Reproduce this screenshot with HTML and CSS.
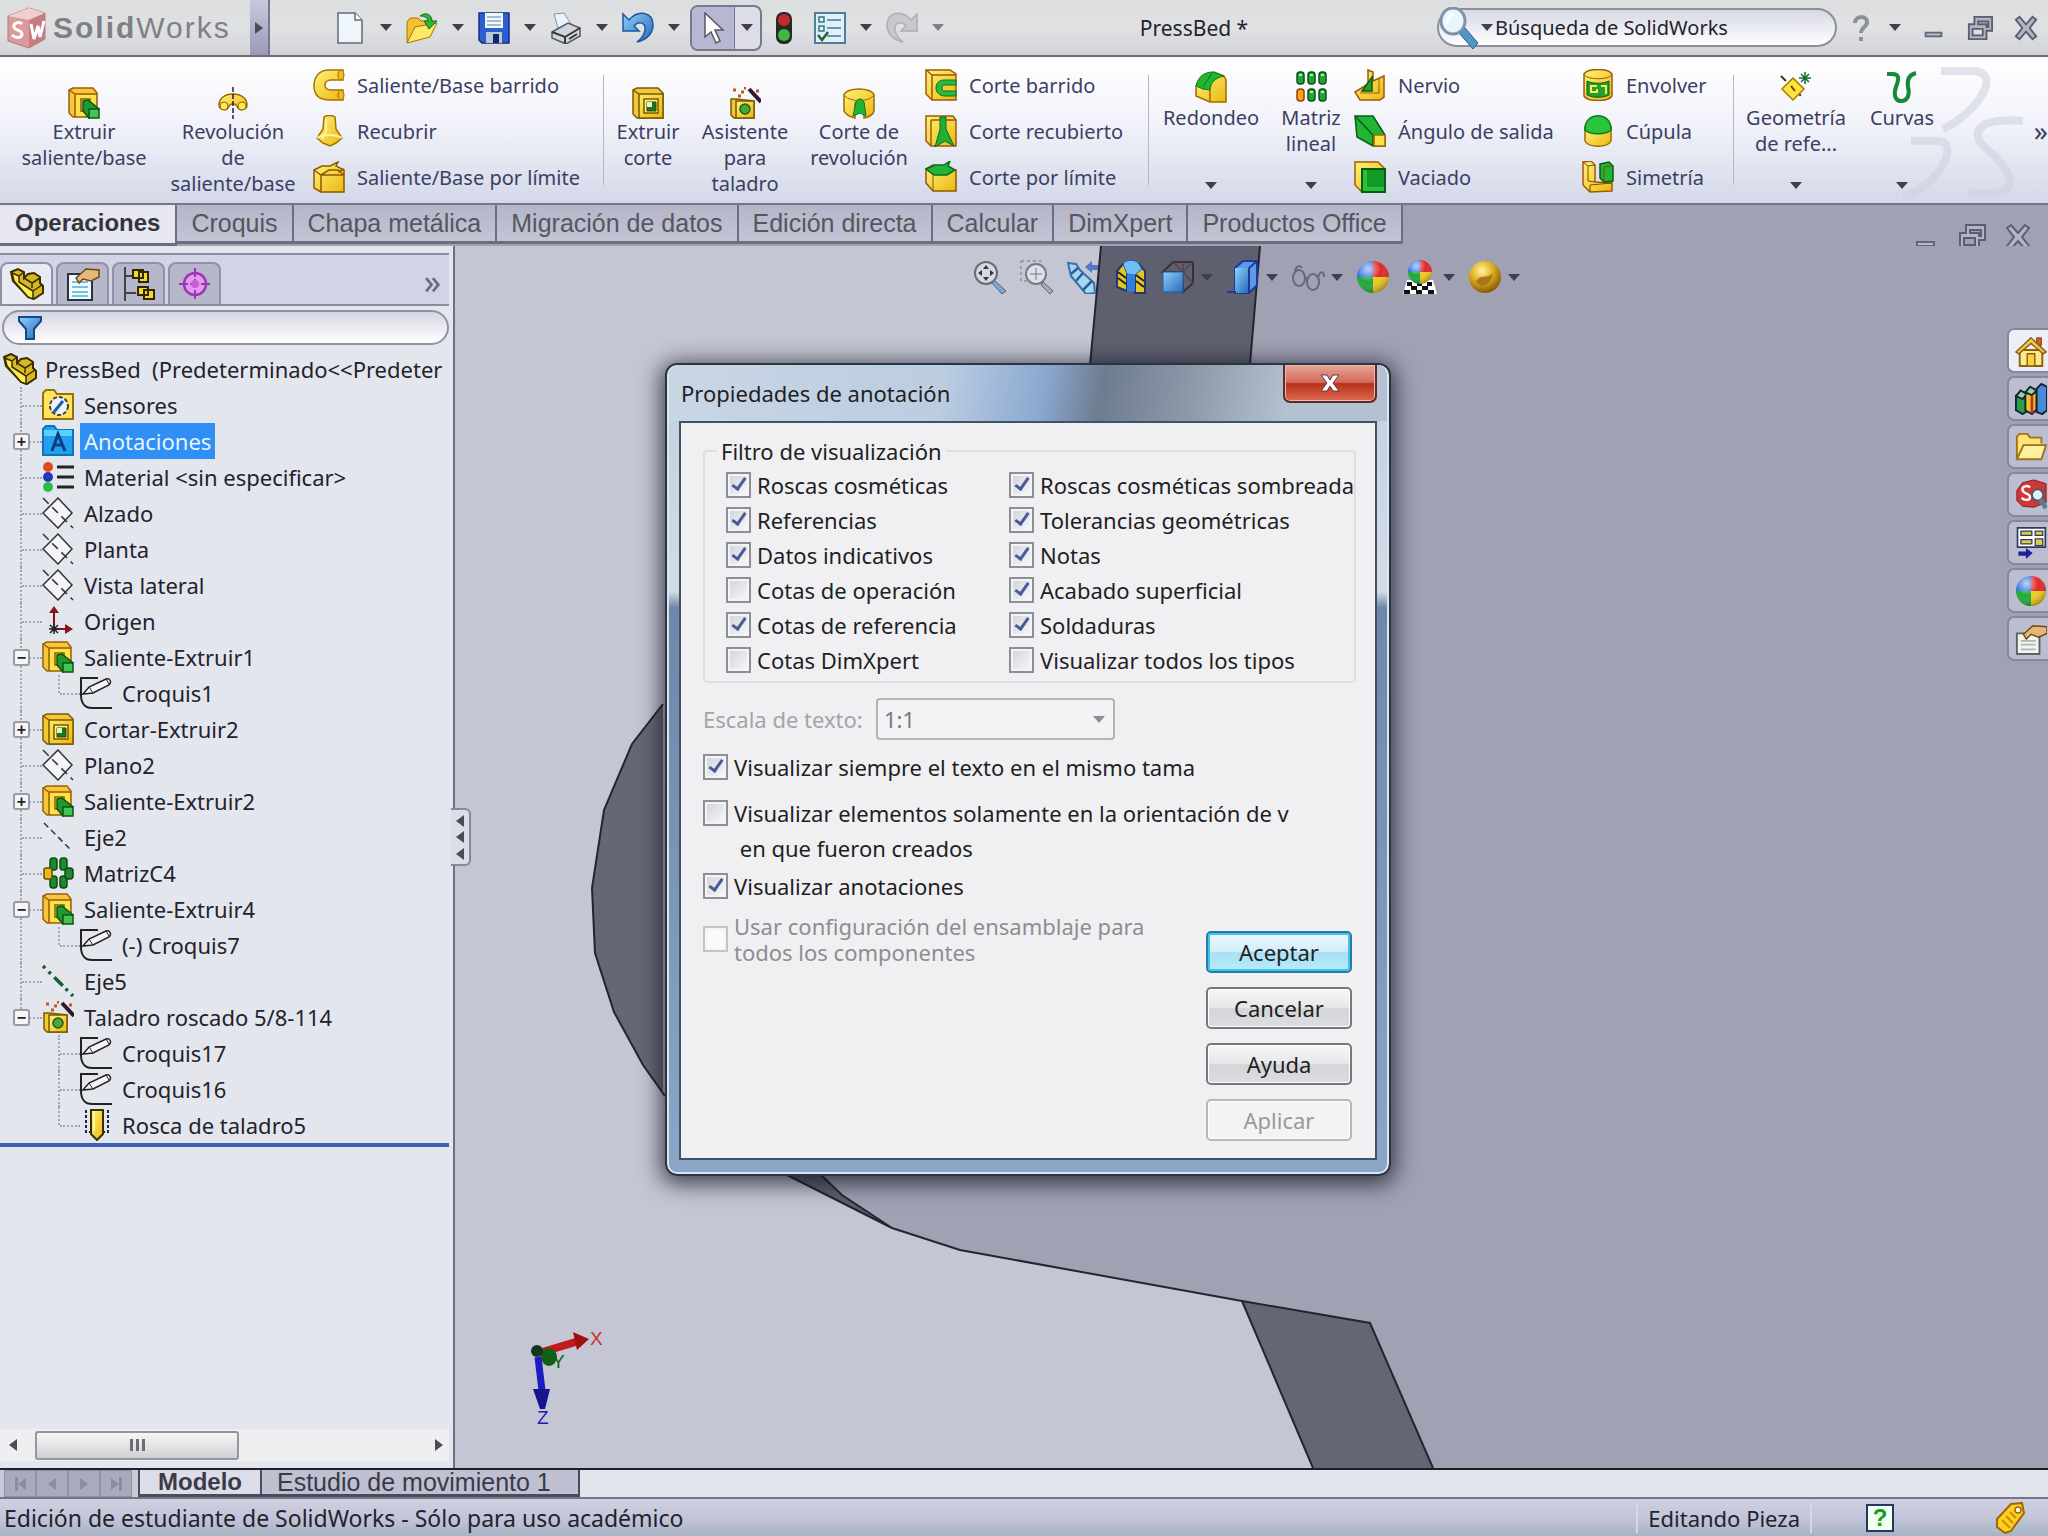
FILE: index.html
```html
<!DOCTYPE html>
<html lang="es">
<head>
  <meta charset="UTF-8" />
  <meta name="viewport" content="width=device-width, initial-scale=1.0"/>
  <title>SolidWorks - PressBed</title>
  <link rel="stylesheet" href="styles.css">
</head>
<body>
  <!-- icon sheet -->
  <svg class="sprite" aria-hidden="true">
    <defs>
      <linearGradient id="gold" x1="0" y1="0" x2="1" y2="1"><stop offset="0" stop-color="#fff27a"/><stop offset="1" stop-color="#ecb810"/></linearGradient>
      <linearGradient id="blue" x1="0" y1="0" x2="1" y2="1"><stop offset="0" stop-color="#8fd0ff"/><stop offset="1" stop-color="#2468b8"/></linearGradient>
      <radialGradient id="goldBall" cx=".4" cy=".3" r=".7"><stop offset="0" stop-color="#fff6a0"/><stop offset=".5" stop-color="#e0ae20"/><stop offset="1" stop-color="#8a5a08"/></radialGradient>
      <radialGradient id="shine" cx=".35" cy=".25" r=".8"><stop offset="0" stop-color="#fff" stop-opacity=".7"/><stop offset=".5" stop-color="#fff" stop-opacity="0"/><stop offset="1" stop-color="#000" stop-opacity=".35"/></radialGradient>
    </defs>
    <symbol id="logo" viewBox="0 0 42 44">
      <path d="M3 10 24 2l16 5v26L24 42 3 35z" fill="#d99a9a" stroke="#b5787c"/>
      <path d="M3 10 24 2l16 5-16 7z" fill="#efd0ce"/><path d="M24 14 40 7v26l-16 9z" fill="#c67c80"/>
      <path d="M17 18c-3-3-9-1-8 3s8 3 8 7-6 5-10 1M26 18l3 15 4-13 2 11 4-16" fill="none" stroke="#fff" stroke-width="3"/>
    </symbol>
    <symbol id="new" viewBox="0 0 32 32"><path d="M4 1h17l7 7v23H4z" fill="#eef5fb" stroke="#5f6b78" stroke-width="1.5"/><path d="M21 1v7h7" fill="#fff" stroke="#5f6b78" stroke-width="1.5"/></symbol>
    <symbol id="open" viewBox="0 0 32 32"><path d="M1 30V10l3-4h8l3 3h10v6z" fill="#f2c230" stroke="#a87400"/><path d="M1 31 9 15l22-4-7 14z" fill="#ffe76a" stroke="#a87400"/><path d="M14 4c6-5 12-1 12 5h5l-8 8-5-8h4c0-3-3-5-8-5z" fill="#2fb52f" stroke="#15701a"/></symbol>
    <symbol id="save" viewBox="0 0 32 32"><path d="M1 1h30v30H4l-3-3z" fill="#2b5fd0" stroke="#132f85" stroke-width="1.5"/><path d="M7 1h18v15H7z" fill="#f3f8ff"/><path d="M9 5h14M9 9h14M9 13h14" stroke="#8aa4c8" stroke-width="1.5"/><path d="M8 20h16v11H8z" fill="#b9c7dd"/><path d="M15 22h6v9h-6z" fill="#12266b"/></symbol>
    <symbol id="print" viewBox="0 0 32 32"><path d="m8 16-4-14 10-1 7 11z" fill="#e7f3ff" stroke="#7d97b5"/><path d="m2 20 16-9 12 5v8L16 32 2 26z" fill="#d2d5da" stroke="#555a63" stroke-width="1.5"/><path d="m2 20 13 5 15-9M15 25v7M19 27l8-5" fill="none" stroke="#33363d" stroke-width="2"/></symbol>
    <symbol id="undo" viewBox="0 0 32 32"><path d="M1 2v17h16l-5-5c5-6 12-3 11 4-1 6-4 9-8 12 10-2 16-9 16-17C31 0 16-3 7 8z" fill="url(#blue)" stroke="#1c559b" stroke-width="1.5"/></symbol>
    <symbol id="redo" viewBox="0 0 32 32"><path d="M31 2v17H15l5-5c-5-6-12-3-11 4 1 6 4 9 8 12C7 28 1 21 1 13 1 0 16-3 25 8z" fill="#b8bbc2" stroke="#8d9098" stroke-width="1.5"/></symbol>
    <symbol id="cursor" viewBox="0 0 32 32"><path d="M8 1v24l6-5 5 11 4-2-5-11h8z" fill="#fff" stroke="#555866" stroke-width="1.5"/></symbol>
    <symbol id="traffic" viewBox="0 0 18 32"><rect x="1" y="0" width="16" height="32" rx="7" fill="#262a26"/><circle cx="9" cy="8" r="6" fill="#c22b2b"/><circle cx="9" cy="23" r="6" fill="#3fb83f"/></symbol>
    <symbol id="options" viewBox="0 0 32 32"><path d="M1 1h30v30H1z" fill="#dff0f8" stroke="#4f7f96" stroke-width="2"/><path d="M5 5h5v5H5zM5 14h5v5H5z" fill="none" stroke="#347a74" stroke-width="1.5"/><path d="M13 8h14M13 16h14M13 24h14" stroke="#6a98b0" stroke-width="2"/><path d="m4 23 4 5 6-8" fill="none" stroke="#23613a" stroke-width="2.5"/></symbol>
    <symbol id="lens" viewBox="0 0 40 42"><path d="m20 26 6-5 13 15-5 6z" fill="#4f98c4" stroke="#2b5f86"/><ellipse cx="14" cy="14" rx="12" ry="13" fill="#e8f5fc" stroke="#7f93a8" stroke-width="3"/><path d="M8 17c0-6 2-9 7-10" stroke="#fff" stroke-width="3" fill="none"/></symbol>
    <symbol id="help" viewBox="0 0 20 28"><path d="M4 9c0-8 13-8 12 0-1 4-6 5-6 10M10 23v4" fill="none" stroke="#8d8f99" stroke-width="4"/></symbol>
    <symbol id="minimize" viewBox="0 0 28 28"><path d="M5 19h17v4H5z" fill="#b9bac6" stroke="#63667a" stroke-width="2"/></symbol>
    <symbol id="restore" viewBox="0 0 28 28"><path d="M8 2h19v15h-6v9H2V10h6zM12 7v3h9v3h2V7zM6 15v7h11v-7z" fill="#b4b5c4" fill-rule="evenodd" stroke="#5b5e72" stroke-width="2"/></symbol>
    <symbol id="close" viewBox="0 0 28 28"><path d="m3 5 4-3 7 8 7-8 4 3-7 9 7 9-4 3-7-8-7 8-4-3 7-9z" fill="#b4b5c4" stroke="#5b5e72" stroke-width="2"/></symbol>
    <symbol id="extrude" viewBox="0 0 32 32"><path d="M1 3 5 1h20l4 5v24H5l-4-4z" fill="#f6c63c" stroke="#9a6008" stroke-width="1.5"/><path d="M1 3l6 4h22M7 7v23" fill="none" stroke="#9a6008" stroke-width="1.5"/><path d="M8 8h20v21H8z" fill="#ffe24a"/><path d="M13 12h9v12h-9z" fill="#fff8a0" stroke="#8a5a00" stroke-width="1.5"/><path d="m15 14 5-1 11 9-10 9-6-7z" fill="#1f9a2c" stroke="#0c5515" stroke-width="1.5"/><path d="M21 22h10v9H21z" fill="#45c455" stroke="#0c5515" stroke-width="1.5"/></symbol>
    <symbol id="cut" viewBox="0 0 32 32"><path d="M1 3 5 1h21l5 5v25H5l-4-4z" fill="#f2c83a" stroke="#7a5a00" stroke-width="1.5"/><path d="M7 7h24v24H7zM1 3l6 4" fill="url(#gold)" stroke="#7a5a00" stroke-width="1.5"/><path d="M12 12h14v14H12z" fill="#fff07a" stroke="#7a5a00" stroke-width="1.5"/><path d="M15 15h9v9h-9z" fill="#187a24" stroke="#3e3c00"/><path d="M15 15h5v5h-5z" fill="#e8f4c8"/></symbol>
    <symbol id="revolve" viewBox="0 0 32 32"><path d="M16 7C7 7 2 12 2 18c0 5 8 7 10 1 2-3 6-3 8 0 2 6 10 4 10-1 0-6-5-11-14-11z" fill="url(#gold)" stroke="#9a6500" stroke-width="1.5"/><circle cx="7" cy="19" r="4" fill="#ffe95a" stroke="#9a6500"/><circle cx="25" cy="19" r="4" fill="#ffe95a" stroke="#9a6500"/><path d="M16 0v32" stroke="#222" stroke-width="1.5" stroke-dasharray="5 2"/></symbol>
    <symbol id="sweep" viewBox="0 0 32 32"><path d="M30 1H16C6 1 1 8 1 17c0 10 6 14 16 14h13V21H18c-8 0-8-10 0-10h12z" fill="url(#gold)" stroke="#a87000" stroke-width="1.5"/><ellipse cx="28" cy="6" rx="3" ry="5" fill="#f0bb20" stroke="#a87000"/><ellipse cx="28" cy="26" rx="3" ry="5" fill="#f0bb20" stroke="#a87000"/></symbol>
    <symbol id="loft" viewBox="0 0 32 32"><path d="M11 2c2-2 8-2 11 0l1 12 6 9-6 5-6 3-7-3-6-5 6-9z" fill="url(#gold)" stroke="#a87000" stroke-width="1.5"/><path d="M4 23c6-4 18-4 25 0M13 4v12l-4 8" fill="none" stroke="#fff2a0" stroke-width="2"/></symbol>
    <symbol id="boundary" viewBox="0 0 32 32"><path d="m1 9 8-4h8l8-4-2 4 8 4v22H8l-7-4z" fill="url(#gold)" stroke="#8a5a00" stroke-width="1.5"/><path d="m1 9 7 5h23M8 14v16M8 14l8-5h9l6 5M31 8l-6 3" fill="none" stroke="#8a5a00" stroke-width="1.5"/></symbol>
    <symbol id="wizard" viewBox="0 0 32 32"><path d="M2 12h5l18 2v17H5l-3-3z" fill="#f2c83a" stroke="#7a5a00" stroke-width="1.5"/><path d="M7 14h18v17H7z" fill="url(#gold)" stroke="#7a5a00" stroke-width="1.5"/><circle cx="16" cy="22" r="5" fill="#45a83c" stroke="#245c16" stroke-width="1.5"/><path d="m20 2 12 13" stroke="#2b1c30" stroke-width="4"/><path d="M4 3h3M12 5h3M9 9h3M15 1h2M27 4h3" stroke="#c05a20" stroke-width="3"/></symbol>
    <symbol id="cutrev" viewBox="0 0 32 32"><path d="M1 8v16c2 5 8 6 11 7V17c2-5 7-5 9 0v14c5-1 9-3 10-7V8c-2-8-28-8-30 0z" fill="url(#gold)" stroke="#a06a00" stroke-width="1.5"/><path d="M2 9c5 6 23 6 28 0" fill="none" stroke="#a06a00"/><path d="m10 29 3-14c2-4 6-4 8 0l2 14-6-3z" fill="#22b534" stroke="#0e7a1c"/></symbol>
    <symbol id="cutsweep" viewBox="0 0 32 32"><path d="M1 1h24l6 4v26H7l-6-6z" fill="url(#gold)" stroke="#a05a08" stroke-width="1.5"/><path d="M7 6h24M7 6v25M1 1l6 5" fill="none" stroke="#a05a08" stroke-width="1.5"/><path d="M31 11H20c-7 0-9 4-9 8s3 8 9 8h11v-5H20c-4 0-4-6 0-6h11z" fill="#2cb83c" stroke="#0f7420"/></symbol>
    <symbol id="cutloft" viewBox="0 0 32 32"><path d="M1 1h27l3 4v26H6l-5-5z" fill="url(#gold)" stroke="#a05a08" stroke-width="1.5"/><path d="M6 5h25M6 5v26" fill="none" stroke="#a05a08" stroke-width="1.5"/><path d="M15 2h6v12l8 17-9-5-10 6 5-18z" fill="#24ae36" stroke="#0d6b1b"/></symbol>
    <symbol id="cutbound" viewBox="0 0 32 32"><path d="m1 8 7-4 23 5v21H8l-7-8z" fill="url(#gold)" stroke="#8a5a00" stroke-width="1.5"/><path d="m1 8 9-4h9l6-4-2 5 7 4-8 5H9z" fill="#26b438" stroke="#0d6b1b" stroke-width="1.5"/><path d="M8 14v16" stroke="#8a5a00"/></symbol>
    <symbol id="fillet" viewBox="0 0 32 32"><path d="M1 15 9 6l10-5 10 4 2 4v22H15L1 25z" fill="url(#gold)" stroke="#a06a00" stroke-width="1.5"/><path d="M1 15C3 5 10 1 18 1l11 4c-9 2-13 6-14 14l-7-1z" fill="#22b534" stroke="#0e7a1c"/><path d="M15 19v12" stroke="#a06a00" stroke-width="1.5"/><path d="m8 16 9-14" stroke="#0e7a1c"/></symbol>
    <symbol id="pattern" viewBox="0 0 32 32"><g fill="#22a534" stroke="#0a5216" stroke-width="1.5"><rect x="2" y="1" width="7" height="12" rx="3"/><rect x="13" y="1" width="7" height="12" rx="3"/><rect x="24" y="1" width="7" height="12" rx="3"/><rect x="13" y="18" width="7" height="12" rx="3"/><rect x="24" y="18" width="7" height="12" rx="3"/></g><rect x="2" y="18" width="7" height="12" rx="3" fill="#f0a820" stroke="#a03c08" stroke-width="1.5"/><path d="M4 4h3M15 4h3M26 4h3M15 21h3M26 21h3" stroke="#b4efb0" stroke-width="2"/></symbol>
    <symbol id="rib" viewBox="0 0 32 32"><path d="m14 1 5 2v9l11-5v21l-4 3H6l-5-8 13-8z" fill="url(#gold)" stroke="#a05a08" stroke-width="1.5"/><path d="M18 8v14H8z" fill="#1fa030" stroke="#0b5a18" stroke-width="1.5"/><path d="M6 24h19V10" fill="none" stroke="#a05a08"/></symbol>
    <symbol id="draft" viewBox="0 0 32 32"><path d="M1 1h18l12 19v11H19L3 22z" fill="#22b534" stroke="#0b5a18" stroke-width="1.5"/><path d="m1 1 18 19v11" fill="none" stroke="#0b5a18" stroke-width="1.5"/><path d="M20 20h11v11H20z" fill="#ffe04a" stroke="#a06a00" stroke-width="1.5"/></symbol>
    <symbol id="shell" viewBox="0 0 32 32"><path d="M1 1h23l7 7v23H8l-7-7z" fill="url(#gold)" stroke="#a05a08" stroke-width="1.5"/><path d="M8 8h23v23H8z" fill="#25c23c" stroke="#0b5a18" stroke-width="2"/><path d="M13 9h17v17H13z" fill="#129a26"/></symbol>
    <symbol id="wrap" viewBox="0 0 32 32"><path d="M2 5c4-6 24-6 28 0v22c-4 6-24 6-28 0z" fill="url(#gold)" stroke="#a05a08" stroke-width="1.5"/><path d="M2 6c5 5 23 5 28 0" fill="none" stroke="#a05a08"/><path d="M5 12c6 3 16 3 22 0v14c-6 3-16 3-22 0z" fill="#1fa030" stroke="#0b5a18"/><path d="M15 17H9v6h6v-3M19 17h5v8" fill="none" stroke="#ffe95a" stroke-width="2"/></symbol>
    <symbol id="dome" viewBox="0 0 32 32"><path d="M3 12v14c4 7 22 7 26 0V12z" fill="url(#gold)" stroke="#a06a00" stroke-width="1.5"/><path d="M3 15C2-4 30-4 29 15c-5 5-21 5-26 0z" fill="#2ac53c" stroke="#0b7a1c" stroke-width="1.5"/></symbol>
    <symbol id="mirror" viewBox="0 0 32 32"><path d="m1 1 8-1 4 4v17l17 1v8l-22 1-7-7z" fill="url(#gold)" stroke="#a05a08" stroke-width="1.5"/><path d="M18 3 27 1l4 4v15l-9 1-4-4z" fill="#22b534" stroke="#0b5a18" stroke-width="1.5"/><path d="M1 1l5 4v15l7 1M8 31v-7l22-2M6 5l7-1M22 21V6l9-1" fill="none" stroke="#7a4a08"/></symbol>
    <symbol id="refgeo" viewBox="0 0 32 32"><path d="m1 5 26 26" stroke="#3c3c1a" stroke-width="2" stroke-dasharray="7 14"/><path d="m13 7 11 11-11 11L2 18z" fill="#ffe23c" stroke="#a08000" stroke-width="1.5"/><path d="m11 15 4 5" stroke="#604800" stroke-width="2"/><path d="M25 1v12M19 7h12M21 3l8 8M29 3l-8 8" stroke="#12702a" stroke-width="1.5"/></symbol>
    <symbol id="curves" viewBox="0 0 32 32"><path d="M1 3h5c8 0 7 5 4 13-3 9 0 14 5 14 7 0 9-7 7-14-1-6 0-12 8-14" fill="none" stroke="#128a38" stroke-width="4"/></symbol>
    <symbol id="part" viewBox="0 0 34 32"><path d="M1 4 8 1l6 3v6l4-4 6-1 6 4v6l3 3v7l-9 6-6-2L3 13z" fill="#d8b820" stroke="#3a2e00" stroke-width="2"/><path d="m2 5 7 3v6l14 9v8l-5-2L4 13z" fill="#ffec50" stroke="#3a2e00" stroke-width="1.5"/><path d="M23 23l9-6M9 8l5-4M14 10l8 5 8-5M22 15v5" fill="none" stroke="#3a2e00" stroke-width="1.5"/></symbol>
    <symbol id="props" viewBox="0 0 34 34"><path d="M2 7h24v26H2z" fill="#f2f8ff" stroke="#26343e" stroke-width="2"/><path d="M6 15h16M6 20h16M6 25h16M6 29h16" stroke="#79bfe0" stroke-width="2"/><path d="m10 11 10-9 13 1v7l-8 4-8-2-4 4z" fill="#e6b878" stroke="#6d4818" stroke-width="1.5"/></symbol>
    <symbol id="config" viewBox="0 0 34 34"><path d="M3 0v34M3 9h8M3 26h11" stroke="#444" stroke-width="2"/><g fill="#f4d82c" stroke="#2f2800" stroke-width="2"><path d="M11 3h10v8H11zM17 5h9v10h-9z"/><path d="M16 20h10v8H16zM22 23h10v9H22z"/></g></symbol>
    <symbol id="dimx" viewBox="0 0 34 34"><circle cx="17" cy="17" r="11" fill="#e29af0" stroke="#9e36b4" stroke-width="2.5"/><path d="M17 1v32M1 17h32" stroke="#9e36b4" stroke-width="2" stroke-dasharray="9 2"/><circle cx="17" cy="17" r="4" fill="#c860da"/></symbol>
    <symbol id="filter" viewBox="0 0 24 24"><path d="M1 1h22v4l-7 8v10H8V13L1 5z" fill="url(#blue)" stroke="#12488c" stroke-width="2"/></symbol>
    <symbol id="sensor" viewBox="0 0 32 32"><path d="M1 4l3-3h8l3 4h16v25H1z" fill="#ffe45c" stroke="#94730a" stroke-width="2"/><circle cx="17" cy="17" r="9" fill="#eef4fa" stroke="#444" stroke-width="2" stroke-dasharray="4 2"/><path d="m12 23 9-11" stroke="#1f5fa8" stroke-width="3"/></symbol>
    <symbol id="annot" viewBox="0 0 32 32"><path d="M1 4l3-3h8l3 4h16v25H1z" fill="#22a0ee" stroke="#1270c0" stroke-width="2"/><path d="M2 5h28v6H2z" fill="#5cd0ff"/><path d="m10 26 6-17 7 17M12 20h9" fill="none" stroke="#103c86" stroke-width="3"/></symbol>
    <symbol id="material" viewBox="0 0 32 32"><circle cx="6" cy="6" r="5" fill="#e04a20"/><circle cx="6" cy="16" r="5" fill="#2338b8"/><circle cx="6" cy="26" r="5" fill="#30b850"/><path d="M15 6h17M15 16h17M15 26h17" stroke="#222" stroke-width="3"/></symbol>
    <symbol id="plane" viewBox="0 0 32 32"><path d="m16 1 14 15-14 15L1 16z" fill="#f4f5f9" stroke="#333" stroke-width="1.5"/><path d="m1 1 30 30" stroke="#333" stroke-width="1.5" stroke-dasharray="8 5"/></symbol>
    <symbol id="origin" viewBox="0 0 32 32"><path d="M12 24V5M14 24h12" stroke="#7c1220" stroke-width="2"/><path d="m7 8 5-7 5 7zM23 19l8 5-8 5z" fill="#8c1220"/><path d="M12 19v10M7 24h10M8 20l8 8M16 20l-8 8" stroke="#222" stroke-width="1.5"/></symbol>
    <symbol id="sketch" viewBox="0 0 32 32"><path d="M18 1H1v17c0 8 4 13 11 13h20" fill="none" stroke="#222" stroke-width="2"/><path d="m3 17 6-7L26 2c4-1 6 3 3 6L13 16z" fill="#f6f6f8" stroke="#222" stroke-width="1.5"/><path d="m9 10 4 6M26 2l3 5" stroke="#222"/></symbol>
    <symbol id="axis" viewBox="0 0 32 32"><path d="m2 2 28 28" stroke="#333" stroke-width="1.5" stroke-dasharray="6 4"/></symbol>
    <symbol id="axis5" viewBox="0 0 32 32"><path d="m1 1 30 30" stroke="#1c5c34" stroke-width="3.5" stroke-dasharray="3 5 3 5 12 4"/></symbol>
    <symbol id="circpat" viewBox="0 0 32 32"><g fill="#1e8a2c" stroke="#0b4a16" stroke-width="1.5"><rect x="8" y="1" width="7" height="12" rx="3"/><rect x="18" y="1" width="7" height="12" rx="3"/><rect x="8" y="19" width="7" height="12" rx="3"/><rect x="18" y="19" width="7" height="12" rx="3"/><rect x="23" y="11" width="8" height="11" rx="3"/></g><rect x="2" y="11" width="8" height="11" rx="2" fill="#e8b820" stroke="#6a4a00" stroke-width="1.5"/></symbol>
    <symbol id="thread" viewBox="0 0 32 32"><path d="M11 1h12v24l-6 6-6-6z" fill="url(#gold)" stroke="#3a2e00" stroke-width="2"/><path d="M6 1v22h4M28 1v22h-4" fill="none" stroke="#224" stroke-width="2" stroke-dasharray="3 2"/><path d="M14 2v20" stroke="#fff8a0" stroke-width="2"/></symbol>
    <symbol id="zoomfit" viewBox="0 0 34 34"><path d="m21 20 12 11-4 3-10-11z" fill="#7fa8d0" stroke="#4a6282"/><circle cx="13" cy="13" r="11" fill="#d8d9e0" stroke="#696b78" stroke-width="2"/><path d="M13 5l3 4h-6zM13 21l3-4h-6zM5 13l4-3v6zM21 13l-4-3v6z" fill="#33353f"/></symbol>
    <symbol id="zoomarea" viewBox="0 0 34 34"><path d="M1 1h20v20H1z" fill="none" stroke="#70727e" stroke-dasharray="3 3"/><path d="m23 22 10 9-3 3-9-9z" fill="#a9abb8" stroke="#60626e"/><circle cx="16" cy="14" r="10" fill="#e0e1e8" stroke="#777986" stroke-width="2"/><path d="M16 8v12M10 14h12" stroke="#777986"/></symbol>
    <symbol id="prevview" viewBox="0 0 34 34"><path d="m1 3 8 1 4 6 14 13 1 10-9 1L4 16z" fill="#a8d6f2" stroke="#3672a8" stroke-width="2"/><path d="m11 8-7 6M16 13l-7 8M25 21l-9 9" stroke="#2a5c9a" stroke-width="2.5"/><path d="M18 7l7-6v4h6v5h-6v3z" fill="#5578c0"/></symbol>
    <symbol id="section" viewBox="0 0 34 34"><path d="M3 11 9 4h16l6 7v22H21V15h-8v16L3 27z" fill="#e6c81c" stroke="#26366e" stroke-width="2"/><path d="M9 4c3-5 13-5 16 0l3 5-7 6-8-1z" fill="#6cc0f4" stroke="#2456a8"/><path d="M13 14h8v17l-8 1z" fill="#2f7fe0"/><path d="m4 12 8 6m-8 0 8 6M22 15l8 6m-8 0 8 6" stroke="#222" stroke-width="2"/></symbol>
    <symbol id="orient" viewBox="0 0 34 34"><path d="m2 12 10-10h20v21L22 32V12z" fill="none" stroke="#3c3038" stroke-width="2"/><path d="M12 2l10 10 10-10M22 12l10 11M22 2v20" fill="none" stroke="#5a4048" stroke-width="1.5"/><path d="M2 12h20v20H2z" fill="url(#blue)" stroke="#2a5c98"/></symbol>
    <symbol id="display" viewBox="0 0 34 34"><path d="m9 8 8-7h14v24l-8 8H9z" fill="#5c9ae4" stroke="#1c3a98" stroke-width="2"/><path d="M9 8h14v25H9z" fill="url(#blue)"/><path d="M23 8l8-7M23 8v25M1 32h9" stroke="#1c3a98" stroke-width="2"/></symbol>
    <symbol id="glasses" viewBox="0 0 34 34"><g fill="none" stroke="#666878" stroke-width="2"><ellipse cx="8" cy="18" rx="6" ry="8"/><ellipse cx="22" cy="22" rx="6" ry="8"/><path d="M14 18l3 1M4 11c1-5 5-6 7-3M27 18c2-8 6-7 6-1"/></g></symbol>
    <symbol id="ball" viewBox="0 0 34 34"><path d="M17 17V1A16 16 0 0 1 33 17z" fill="#e02828"/><path d="M17 17h16a16 16 0 0 1-16 16z" fill="#f0c820"/><path d="M17 17v16A16 16 0 0 1 1 17z" fill="#20a838"/><path d="M17 17H1A16 16 0 0 1 17 1z" fill="#2c6ee0"/><circle cx="17" cy="17" r="16" fill="url(#shine)"/></symbol>
    <symbol id="scene" viewBox="0 0 34 34"><path d="M4 20h26l4 14H0z" fill="#fff"/><path d="M4 22h5v4H4zM14 22h5v4h-5zM24 22h5v4h-5zM8 26h6v4H8zM19 26h6v4h-6zM1 30h6v4H1zM13 30h6v4h-6zM25 30h6v4h-6z" fill="#111"/><path d="M17 12V0a12 12 0 0 1 12 12z" fill="#e02828"/><path d="M17 12h12a12 12 0 0 1-12 12z" fill="#f0c820"/><path d="M17 12v12A12 12 0 0 1 5 12z" fill="#20a838"/><path d="M17 12H5A12 12 0 0 1 17 0z" fill="#2c6ee0"/><circle cx="17" cy="12" r="12" fill="url(#shine)"/></symbol>
    <symbol id="render" viewBox="0 0 34 34"><circle cx="17" cy="17" r="16" fill="url(#goldBall)"/><path d="M8 22c4-9 10-2 17-9-1 8-6 13-12 13" fill="#a87818"/></symbol>
    <symbol id="home" viewBox="0 0 34 34"><path d="M23 3h5v8h-5z" fill="#d85a30" stroke="#7a3a10"/><path d="M5 16h24v17H5z" fill="#ffe88a" stroke="#8a6010" stroke-width="2"/><path d="M1 18 17 3l16 15-3 2L17 9 4 20z" fill="#f2c84c" stroke="#8a6010" stroke-width="1.5"/><path d="M13 20h8v13h-8z" fill="#ffd240" stroke="#8a6010" stroke-width="1.5"/></symbol>
    <symbol id="library" viewBox="0 0 34 34"><path d="m1 14 7 3 5-5v18l-5 3-7-4z" fill="#2e9e48" stroke="#123" stroke-width="2"/><path d="m11 10 7 3 5-5v20l-5 5-7-4z" fill="#e8c828" stroke="#123" stroke-width="2"/><path d="m23 6 5-5 6 3v25l-5 4-6-2z" fill="#4a8ad8" stroke="#123" stroke-width="2"/><path d="M18 14v18" stroke="#c83020" stroke-width="3"/><path d="m1 14 5-6 7 4M11 10l5-6 7 4" fill="#8ad88a" stroke="#123" stroke-width="2"/></symbol>
    <symbol id="folder" viewBox="0 0 34 34"><path d="M2 30V6l3-3h8l3 4h12v6" fill="#ffe27a" stroke="#9a7418" stroke-width="2"/><path d="m2 30 7-15h24l-5 15z" fill="#fff0a0" stroke="#9a7418" stroke-width="2"/></symbol>
    <symbol id="search" viewBox="0 0 34 34"><path d="m2 12 6-8 12-3 13 4v20l-13 5-12-1-6-6z" fill="#cc3838" stroke="#8a1818"/><path d="M16 9c-3-3-9-1-8 3s8 3 8 7-6 4-9 1" fill="none" stroke="#fff" stroke-width="2.5"/><circle cx="24" cy="17" r="6" fill="#dff0f4" stroke="#556" stroke-width="2"/><path d="m27 22 6 9" stroke="#4a8890" stroke-width="5"/></symbol>
    <symbol id="palette" viewBox="0 0 34 38"><path d="M1 1h33v23H1z" fill="#fff" stroke="#2c3a60" stroke-width="2"/><path d="M5 5h13v5H5zM22 5h9v5h-9zM5 15h13v5H5zM22 14h9v8h-9z" fill="#d8cc50" stroke="#333a50" stroke-width="1.5"/><path d="M2 29h9v-4l8 6-8 7v-4H2z" fill="#1a20a0"/></symbol>
    <symbol id="notes" viewBox="0 0 34 34"><path d="M2 11h24v22H2z" fill="#f4f4ee" stroke="#5c6068" stroke-width="2"/><path d="M6 19h16M6 23h16M6 28h16" stroke="#b0b4b8" stroke-width="2"/><path d="m9 12 10-9 15 1v7l-9 4-8-3-5 5z" fill="#e6b878" stroke="#6d4818" stroke-width="1.5"/></symbol>
    <symbol id="tag" viewBox="0 0 32 32"><path d="M3 17 17 2l11-1 2 10-13 18-6 2-8-6z" fill="#ffce20" stroke="#9a6a00" stroke-width="2"/><circle cx="24" cy="8" r="3" fill="#fff" stroke="#9a6a00" stroke-width="1.5"/><path d="m8 18 8 8M12 14l7 7M16 10l6 6" stroke="#c88c00" stroke-width="2"/></symbol>
  </svg>

  <div class="app">
    <header class="titlebar">
      <div class="brand">
        <svg class="brand-logo"><use href="#logo"/></svg>
        <span class="brand-name"><b>Solid</b>Works</span>
      </div>
      <button class="brand-more" aria-label="Menú"><i class="tri-right"></i></button>
      <div class="quick">
        <button class="tool" aria-label="Nuevo"><svg><use href="#new"/></svg><i class="tri"></i></button>
        <button class="tool" aria-label="Abrir"><svg><use href="#open"/></svg><i class="tri"></i></button>
        <button class="tool" aria-label="Guardar"><svg><use href="#save"/></svg><i class="tri"></i></button>
        <button class="tool" aria-label="Imprimir"><svg><use href="#print"/></svg><i class="tri"></i></button>
        <button class="tool" aria-label="Deshacer"><svg><use href="#undo"/></svg><i class="tri"></i></button>
        <button class="tool selected" aria-label="Seleccionar"><span class="sel-icon"><svg><use href="#cursor"/></svg></span><i class="tri"></i></button>
        <button class="tool narrow" aria-label="Reconstruir"><svg><use href="#traffic"/></svg></button>
        <button class="tool" aria-label="Opciones"><svg><use href="#options"/></svg><i class="tri"></i></button>
        <button class="tool faded" aria-label="Rehacer"><svg><use href="#redo"/></svg><i class="tri"></i></button>
      </div>
      <div class="doc-title">PressBed *</div>
      <div class="search">
        <svg><use href="#lens"/></svg>
        <i class="tri"></i>
        <input type="text" aria-label="Búsqueda" value="Búsqueda de SolidWorks" />
      </div>
      <div class="win-controls">
        <button class="ask" aria-label="Ayuda"><svg><use href="#help"/></svg><i class="tri"></i></button>
        <button aria-label="Minimizar"><svg><use href="#minimize"/></svg></button>
        <button aria-label="Restaurar"><svg><use href="#restore"/></svg></button>
        <button aria-label="Cerrar"><svg><use href="#close"/></svg></button>
      </div>
    </header>

    <div class="ribbon">
      <button class="big w168"><svg><use href="#extrude"/></svg><span>Extruir<br>saliente/base</span></button>
      <button class="big w130"><svg><use href="#revolve"/></svg><span>Revolución<br>de<br>saliente/base</span></button>
      <div class="stack w305">
        <button><svg><use href="#sweep"/></svg>Saliente/Base barrido</button>
        <button><svg><use href="#loft"/></svg>Recubrir</button>
        <button><svg><use href="#boundary"/></svg>Saliente/Base por límite</button>
      </div>
      <div class="sep"></div>
      <button class="big w88"><svg><use href="#cut"/></svg><span>Extruir<br>corte</span></button>
      <button class="big w106"><svg><use href="#wizard"/></svg><span>Asistente<br>para<br>taladro</span></button>
      <button class="big w122"><svg><use href="#cutrev"/></svg><span>Corte de<br>revolución</span></button>
      <div class="stack w228">
        <button><svg><use href="#cutsweep"/></svg>Corte barrido</button>
        <button><svg><use href="#cutloft"/></svg>Corte recubierto</button>
        <button><svg><use href="#cutbound"/></svg>Corte por límite</button>
      </div>
      <div class="sep"></div>
      <button class="big drop w124"><svg><use href="#fillet"/></svg><span>Redondeo</span><i class="tri"></i></button>
      <button class="big drop w76"><svg><use href="#pattern"/></svg><span>Matriz<br>lineal</span><i class="tri"></i></button>
      <div class="stack w228">
        <button><svg><use href="#rib"/></svg>Nervio</button>
        <button><svg><use href="#draft"/></svg>Ángulo de salida</button>
        <button><svg><use href="#shell"/></svg>Vaciado</button>
      </div>
      <div class="stack w156">
        <button><svg><use href="#wrap"/></svg>Envolver</button>
        <button><svg><use href="#dome"/></svg>Cúpula</button>
        <button><svg><use href="#mirror"/></svg>Simetría</button>
      </div>
      <div class="sep"></div>
      <button class="big drop w124"><svg><use href="#refgeo"/></svg><span>Geometría<br>de refe...</span><i class="tri"></i></button>
      <button class="big drop w88"><svg><use href="#curves"/></svg><span>Curvas</span><i class="tri"></i></button>
      <button class="overflow" aria-label="Más">»</button>
      <svg class="watermark" viewBox="0 0 125 136"><path d="M38 8h30c34 0 6 42-28 58M8 78h26c24 0 4 44-34 56M120 58c-44-4-56 12-36 28s38 46 2 44H66" fill="none" stroke="#d0d2e0" stroke-width="8"/></svg>
    </div>

    <nav class="tabs">
      <a href="#" class="active">Operaciones</a>
      <a href="#">Croquis</a>
      <a href="#">Chapa metálica</a>
      <a href="#">Migración de datos</a>
      <a href="#">Edición directa</a>
      <a href="#">Calcular</a>
      <a href="#">DimXpert</a>
      <a href="#">Productos Office</a>
      <div class="doc-controls">
        <button aria-label="Minimizar documento"><svg><use href="#minimize"/></svg></button>
        <button aria-label="Restaurar documento"><svg><use href="#restore"/></svg></button>
        <button aria-label="Cerrar documento"><svg><use href="#close"/></svg></button>
      </div>
    </nav>

    <main class="work">
      <aside class="panel">
        <div class="panel-tabs">
          <button class="active" aria-label="Árbol"><svg><use href="#part"/></svg></button>
          <button aria-label="Propiedades"><svg><use href="#props"/></svg></button>
          <button aria-label="Configuraciones"><svg><use href="#config"/></svg></button>
          <button aria-label="DimXpert"><svg><use href="#dimx"/></svg></button>
          <span class="more">»</span>
        </div>
        <div class="filter">
          <svg><use href="#filter"/></svg>
          <input type="text" aria-label="Filtro" />
        </div>
        <div class="tree">
          <div class="root"><svg><use href="#part"/></svg><span>PressBed&nbsp; (Predeterminado&lt;&lt;Predeter</span></div>
          <ul>
            <li><div class="node"><svg><use href="#sensor"/></svg><span>Sensores</span></div></li>
            <li><div class="node"><button class="exp">+</button><svg><use href="#annot"/></svg><span class="hit">Anotaciones</span></div></li>
            <li><div class="node"><svg><use href="#material"/></svg><span>Material &lt;sin especificar&gt;</span></div></li>
            <li><div class="node"><svg><use href="#plane"/></svg><span>Alzado</span></div></li>
            <li><div class="node"><svg><use href="#plane"/></svg><span>Planta</span></div></li>
            <li><div class="node"><svg><use href="#plane"/></svg><span>Vista lateral</span></div></li>
            <li><div class="node"><svg><use href="#origin"/></svg><span>Origen</span></div></li>
            <li><div class="node"><button class="exp">−</button><svg><use href="#extrude"/></svg><span>Saliente-Extruir1</span></div>
              <ul>
                <li><div class="node"><svg><use href="#sketch"/></svg><span>Croquis1</span></div></li>
              </ul>
            </li>
            <li><div class="node"><button class="exp">+</button><svg><use href="#cut"/></svg><span>Cortar-Extruir2</span></div></li>
            <li><div class="node"><svg><use href="#plane"/></svg><span>Plano2</span></div></li>
            <li><div class="node"><button class="exp">+</button><svg><use href="#extrude"/></svg><span>Saliente-Extruir2</span></div></li>
            <li><div class="node"><svg><use href="#axis"/></svg><span>Eje2</span></div></li>
            <li><div class="node"><svg><use href="#circpat"/></svg><span>MatrizC4</span></div></li>
            <li><div class="node"><button class="exp">−</button><svg><use href="#extrude"/></svg><span>Saliente-Extruir4</span></div>
              <ul>
                <li><div class="node"><svg><use href="#sketch"/></svg><span>(-) Croquis7</span></div></li>
              </ul>
            </li>
            <li><div class="node"><svg><use href="#axis5"/></svg><span>Eje5</span></div></li>
            <li><div class="node"><button class="exp">−</button><svg><use href="#wizard"/></svg><span>Taladro roscado 5/8-114</span></div>
              <ul>
                <li><div class="node"><svg><use href="#sketch"/></svg><span>Croquis17</span></div></li>
                <li><div class="node"><svg><use href="#sketch"/></svg><span>Croquis16</span></div></li>
                <li><div class="node"><svg><use href="#thread"/></svg><span>Rosca de taladro5</span></div></li>
              </ul>
            </li>
          </ul>
        </div>
        <div class="scrollbar">
          <i class="tri-left"></i>
          <div class="thumb"><i></i><i></i><i></i></div>
          <i class="tri-right"></i>
        </div>
        <button class="grip" aria-label="Ocultar panel"><i class="tri-left"></i><i class="tri-left"></i><i class="tri-left"></i></button>
      </aside>

      <section class="viewport">
        <svg class="model" viewBox="0 0 1593 1222" preserveAspectRatio="xMinYMin slice">
          <path d="M805 0h788v1222H978L915 1077 787 1055 505 1004 437 982 330 928 210 800V458L620 160 794 117z" fill="#a1a1b4"/>
          <path d="M646 0h159l-11 130H634z" fill="#5f606f"/>
          <path d="M330 928h35l22 21 50 33z" fill="#5f606f"/>
          <path d="M208 458 177 498 149 564 137 642 140 707 159 766 188 819 208 848z" fill="#666776"/>
          <path d="M787 1055l128 22 63 145H858z" fill="#646674"/>
          <path d="M646 0 634 130M805 0 794 130M208 458 177 498 149 564 137 642 140 707 159 766 188 819 210 850M330 928l107 54 68 22 282 51 128 22 63 145M787 1055l71 167M365 928l22 21 50 33" fill="none" stroke="#24252d" stroke-width="2"/>
        </svg>

        <div class="heads-up">
          <button aria-label="Zoom para ajustar"><svg><use href="#zoomfit"/></svg></button>
          <button aria-label="Zoom encuadre"><svg><use href="#zoomarea"/></svg></button>
          <button aria-label="Vista previa"><svg><use href="#prevview"/></svg></button>
          <button aria-label="Vista de sección"><svg><use href="#section"/></svg></button>
          <button aria-label="Orientación"><svg><use href="#orient"/></svg><i class="tri"></i></button>
          <button aria-label="Estilo"><svg><use href="#display"/></svg><i class="tri"></i></button>
          <button aria-label="Ocultar"><svg><use href="#glasses"/></svg><i class="tri"></i></button>
          <button aria-label="Apariencia"><svg><use href="#ball"/></svg></button>
          <button aria-label="Escena"><svg><use href="#scene"/></svg><i class="tri"></i></button>
          <button aria-label="Ver"><svg><use href="#render"/></svg><i class="tri"></i></button>
        </div>

        <div class="task-pane">
          <button class="active" aria-label="Recursos"><svg><use href="#home"/></svg></button>
          <button aria-label="Biblioteca"><svg><use href="#library"/></svg></button>
          <button aria-label="Explorador"><svg><use href="#folder"/></svg></button>
          <button aria-label="Buscar"><svg><use href="#search"/></svg></button>
          <button aria-label="Paleta"><svg><use href="#palette"/></svg></button>
          <button aria-label="Apariencias"><svg><use href="#ball"/></svg></button>
          <button aria-label="Propiedades"><svg><use href="#notes"/></svg></button>
        </div>

        <svg class="triad" viewBox="0 0 80 110">
          <path d="m8 24 40-12" stroke="#c01c1c" stroke-width="8"/><path d="m42 3 16 7-12 11z" fill="#a01010"/>
          <ellipse cx="18" cy="28" rx="8" ry="9" fill="#0c6018"/><circle cx="6" cy="22" r="6" fill="#103820"/>
          <path d="m7 28 5 42" stroke="#1c1cc0" stroke-width="7"/><path d="M2 60h17l-5 20h-5z" fill="#14148c"/>
          <text x="59" y="16" fill="#c83030">X</text><text x="21" y="39" fill="#0c6018">Y</text><text x="6" y="95" fill="#2020b0">Z</text>
        </svg>

        <div class="dialog" role="dialog" aria-labelledby="dlgTitle">
          <div class="dialog-head">
            <h1 id="dlgTitle">Propiedades de anotación</h1>
            <button class="dialog-close" aria-label="Cerrar"><svg viewBox="0 0 20 18"><path d="M1 1h6l3 5 3-5h6l-6 8 6 8h-6l-3-5-3 5H1l6-8z" fill="#fff" stroke="#5d3a3a"/></svg></button>
          </div>
          <form class="dialog-body">
            <fieldset>
              <legend>Filtro de visualización</legend>
              <div class="checks">
                <label><input type="checkbox" checked>Roscas cosméticas</label>
                <label><input type="checkbox" checked>Roscas cosméticas sombreada</label>
                <label><input type="checkbox" checked>Referencias</label>
                <label><input type="checkbox" checked>Tolerancias geométricas</label>
                <label><input type="checkbox" checked>Datos indicativos</label>
                <label><input type="checkbox" checked>Notas</label>
                <label><input type="checkbox">Cotas de operación</label>
                <label><input type="checkbox" checked>Acabado superficial</label>
                <label><input type="checkbox" checked>Cotas de referencia</label>
                <label><input type="checkbox" checked>Soldaduras</label>
                <label><input type="checkbox">Cotas DimXpert</label>
                <label><input type="checkbox">Visualizar todos los tipos</label>
              </div>
            </fieldset>
            <div class="scale">
              <label for="scale">Escala de texto:</label>
              <div class="combo"><select id="scale" disabled><option>1:1</option></select><i class="tri"></i></div>
            </div>
            <label class="opt"><input type="checkbox" checked>Visualizar siempre el texto en el mismo tama</label>
            <label class="opt two"><input type="checkbox"><span>Visualizar elementos solamente en la orientación de v<br>&nbsp;en que fueron creados</span></label>
            <label class="opt"><input type="checkbox" checked>Visualizar anotaciones</label>
            <div class="dialog-foot">
              <label class="opt off"><input type="checkbox" disabled><span>Usar configuración del ensamblaje para todos los componentes</span></label>
              <div class="buttons">
                <button type="button" class="primary">Aceptar</button>
                <button type="button">Cancelar</button>
                <button type="button">Ayuda</button>
                <button type="button" disabled>Aplicar</button>
              </div>
            </div>
          </form>
        </div>
      </section>
    </main>

    <div class="sheets">
      <div class="nav">
        <button aria-label="Primero"><b></b><i class="tri-left"></i></button>
        <button aria-label="Anterior"><i class="tri-left"></i></button>
        <button aria-label="Siguiente"><i class="tri-right"></i></button>
        <button aria-label="Último"><i class="tri-right"></i><b></b></button>
      </div>
      <a href="#" class="active">Modelo</a>
      <a href="#">Estudio de movimiento 1</a>
    </div>

    <footer class="status">
      <span class="edition">Edición de estudiante de SolidWorks - Sólo para uso académico</span>
      <span class="mode">Editando Pieza</span>
      <button class="status-help" aria-label="Ayuda">?</button>
      <button class="status-tag" aria-label="Etiquetas"><svg><use href="#tag"/></svg></button>
    </footer>
  </div>
</body>
</html>
```
FILE: styles.css
```css
* {
  box-sizing: border-box;
}
body {
  margin: 0;
  font-family: "Noto Sans", "Open Sans", sans-serif;
  font-size: 20px;
  color: #22232c;
}
button {
  background: none;
  border: none;
  padding: 0;
  margin: 0;
  font: inherit;
  color: inherit;
}
a {
  color: inherit;
  text-decoration: none;
}
svg {
  display: block;
  flex: none;
}
.sprite {
  position: absolute;
  width: 0;
  height: 0;
}
.app {
  display: flex;
  flex-direction: column;
  height: 100vh;
  overflow: hidden;
}

/* small arrows */
.tri, .tri-left, .tri-right {
  flex: none;
  width: 0;
  height: 0;
}
.tri {
  border: 6px solid transparent;
  border-top: 7px solid #3e404a;
  border-bottom: none;
}
.tri-left {
  border: 6px solid transparent;
  border-right: 8px solid #4a4c56;
  border-left: none;
}
.tri-right {
  border: 6px solid transparent;
  border-left: 8px solid #4a4c56;
  border-right: none;
}

/* title bar */
.titlebar {
  display: flex;
  align-items: center;
  height: 57px;
  background: linear-gradient(#dcdddf, #e0e1e3 50%, #d3d4d8);
  border-bottom: 2px solid #6c6e78;
}
.brand {
  display: flex;
  align-items: center;
  width: 250px;
  padding-left: 5px;
  gap: 6px;
}
.brand-logo {
  width: 42px;
  height: 46px;
}
.brand-name {
  font: 30px "Liberation Sans", sans-serif;
  letter-spacing: 2px;
  color: #7f8085;
}
.brand-more {
  display: flex;
  align-items: center;
  justify-content: center;
  align-self: stretch;
  width: 20px;
  background: linear-gradient(#c9c9dd, #9a9ab8);
  border-right: 2px solid #777890;
}
.quick {
  display: flex;
  align-items: center;
  margin-left: 63px;
}
.tool {
  display: flex;
  align-items: center;
  gap: 13px;
  width: 72px;
}
.tool svg {
  width: 34px;
  height: 32px;
}
.tool.selected {
  gap: 0;
  width: 72px;
  height: 46px;
  margin: 0 13px 0 -3px;
  border: 2px solid #777a8c;
  border-radius: 8px;
  background: #dcdde6;
}
.sel-icon {
  display: flex;
  align-items: center;
  justify-content: center;
  width: 43px;
  height: 42px;
  margin-right: 6px;
  background: #b7b7d3;
  border-right: 1px solid #777a8c;
  border-radius: 6px 0 0 6px;
}
.tool.narrow {
  width: 38px;
}
.tool.narrow svg {
  width: 18px;
}
.faded {
  opacity: .6;
}
.doc-title {
  flex: 1;
  padding-right: 6px;
  font-size: 21px;
  text-align: center;
}
.search {
  display: flex;
  align-items: center;
  gap: 2px;
  width: 400px;
  height: 39px;
  border: 2px solid #8c8e9c;
  border-radius: 20px;
  background: linear-gradient(#d6d8e4, #fff);
}
.search svg {
  width: 40px;
  height: 42px;
}
.search input {
  flex: 1;
  min-width: 0;
  border: none;
  background: none;
  padding: 0;
  font: inherit;
  color: inherit;
}
.win-controls {
  display: flex;
  align-items: center;
  gap: 20px;
  padding: 0 9px 0 14px;
}
.win-controls svg {
  width: 26px;
  height: 28px;
}
.win-controls .ask {
  display: flex;
  align-items: center;
  gap: 18px;
}
.ask svg {
  width: 20px;
}

/* command ribbon */
.ribbon {
  position: relative;
  display: flex;
  height: 148px;
  background: linear-gradient(#fff, #f2f3fa 45%, #d4d8e8);
  border-bottom: 2px solid #74768a;
  color: #3c3e63;
}
.ribbon svg {
  width: 32px;
  height: 32px;
}
.big {
  display: flex;
  flex-direction: column;
  align-items: center;
  padding-top: 30px;
  line-height: 26px;
  white-space: nowrap;
}
.big.drop {
  padding: 14px 0 14px;
}
.big.drop span {
  margin-top: 2px;
}
.big.drop .tri {
  margin-top: auto;
}
.stack {
  display: flex;
  flex-direction: column;
  padding: 5px 0 0 5px;
}
.stack.w305 {
  padding-left: 15px;
}
.stack button {
  display: flex;
  align-items: center;
  gap: 12px;
  height: 46px;
  white-space: nowrap;
}
.sep {
  width: 1px;
  margin: 18px 0;
  background: #b4b6c8;
}
.w76 { width: 76px; }
.w88 { width: 88px; }
.w106 { width: 106px; }
.w122 { width: 122px; }
.w124 { width: 124px; }
.w130 { width: 130px; }
.w156 { width: 156px; }
.w168 { width: 168px; }
.w228 { width: 228px; }
.w305 { width: 305px; }
.overflow {
  margin-left: auto;
  font-size: 28px;
  z-index: 1;
}
.ribbon .watermark {
  position: absolute;
  right: 20px;
  top: 6px;
  width: 125px;
  height: 136px;
  opacity: .6;
}

/* command tabs */
.tabs {
  display: flex;
  align-items: flex-start;
  height: 41px;
  background: #a0a1b4;
  font: 25px/36px "Liberation Sans", sans-serif;
  color: #55565f;
}
.tabs a {
  padding: 0 14px;
  background: linear-gradient(#b4b5c8, #c3c4d4);
  border-right: 2px solid #6c6e80;
  border-bottom: 3px solid #6c6e80;
  white-space: nowrap;
}
.tabs a.active {
  height: 41px;
  padding: 0 15px;
  background: #e6e7f0;
  font-size: 24px;
  font-weight: bold;
  color: #33343c;
}
.doc-controls {
  display: flex;
  gap: 18px;
  margin: 18px 16px 0 auto;
}
.doc-controls svg {
  width: 28px;
  height: 28px;
}

/* feature tree */
.work {
  display: flex;
  flex: 1;
  min-height: 0;
}
.panel {
  position: relative;
  display: flex;
  flex-direction: column;
  width: 455px;
  padding: 7px 4px 0 0;
  background: #e4e6ee;
  border-right: 2px solid #6e7084;
}
.panel-tabs {
  display: flex;
  align-items: flex-end;
  gap: 3px;
  height: 53px;
  background: #d3d3e8;
  border-top: 2px solid #8a8c9e;
  border-bottom: 2px solid #8a8c9e;
}
.panel-tabs button {
  display: flex;
  align-items: center;
  justify-content: center;
  width: 53px;
  height: 42px;
  background: #b6b7cb;
  border: 2px solid #8f91a4;
  border-bottom: none;
  border-radius: 8px 8px 0 0;
}
.panel-tabs .active {
  background: #e8e9f2;
}
.panel-tabs svg {
  width: 34px;
  height: 34px;
}
.more {
  margin-left: auto;
  padding-right: 8px;
  font-size: 34px;
  line-height: 46px;
  color: #66687a;
}
.filter {
  display: flex;
  align-items: center;
  height: 35px;
  margin: 4px 0 6px 2px;
  padding-left: 14px;
  border: 2px solid #9193a4;
  border-radius: 18px;
  background: linear-gradient(#d5d6e4, #fff);
}
.filter svg {
  width: 24px;
  height: 24px;
}
.filter input {
  flex: 1;
  border: none;
  background: none;
}
.tree {
  overflow: hidden;
  border-bottom: 4px solid #3c62b8;
  font-size: 22px;
  white-space: nowrap;
}
.root {
  display: flex;
  align-items: center;
  height: 36px;
  padding-left: 3px;
  gap: 8px;
}
.root svg {
  width: 34px;
  height: 32px;
}
.tree ul {
  margin: 0;
  padding: 0;
  list-style: none;
}
.tree ul ul {
  margin-left: 38px;
}
.tree li {
  position: relative;
}
.tree li::before {
  content: "";
  position: absolute;
  left: 20px;
  top: 0;
  bottom: 0;
  border-left: 2px dotted #a3a5b2;
}
.tree li:last-child::before {
  bottom: auto;
  height: 18px;
}
.node {
  position: relative;
  display: flex;
  align-items: center;
  height: 36px;
  padding-left: 42px;
}
.node::before {
  content: "";
  position: absolute;
  left: 22px;
  width: 20px;
  top: 18px;
  border-top: 2px dotted #a3a5b2;
}
.node svg {
  width: 32px;
  height: 32px;
}
.node span {
  margin-left: 6px;
  padding: 0 4px;
  line-height: 36px;
}
.node .hit {
  background: #2f8ff5;
  color: #e8f4ff;
}
.exp {
  position: absolute;
  left: 13px;
  top: 10px;
  width: 17px;
  height: 17px;
  border: 2px solid #9a9ba4;
  border-radius: 3px;
  background: #f6f6f8;
  font: bold 16px/12px "Liberation Sans", sans-serif;
}
.scrollbar {
  display: flex;
  align-items: center;
  height: 32px;
  margin-top: auto;
  margin-bottom: 7px;
  padding: 0 6px 0 9px;
  background: #efeff1;
}
.scrollbar .tri-right {
  margin-left: auto;
}
.thumb {
  display: flex;
  align-items: center;
  justify-content: center;
  gap: 3px;
  width: 204px;
  height: 29px;
  margin-left: 18px;
  border: 2px solid #96979c;
  border-radius: 3px;
  background: linear-gradient(#f6f6f6, #e6e6e8 45%, #cfd0d3);
}
.thumb i {
  width: 3px;
  height: 12px;
  background: #6b6c72;
}
.grip {
  position: absolute;
  left: 451px;
  top: 562px;
  z-index: 2;
  display: flex;
  flex-direction: column;
  align-items: center;
  justify-content: space-evenly;
  width: 20px;
  height: 58px;
  background: #dcdde8;
  border: 2px solid #8588a0;
  border-left: none;
  border-radius: 0 6px 6px 0;
}

/* graphics area */
.viewport {
  position: relative;
  flex: 1;
  overflow: hidden;
  background: #c5c6d3;
}
.model {
  position: absolute;
  width: 100%;
  height: 100%;
}
.heads-up {
  position: relative;
  display: flex;
  justify-content: center;
  gap: 13px;
  padding: 14px 10px 0 0;
}
.heads-up button {
  display: flex;
  align-items: center;
  gap: 6px;
}
.heads-up svg {
  width: 34px;
  height: 34px;
}
.task-pane {
  position: absolute;
  right: 0;
  top: 82px;
  display: flex;
  flex-direction: column;
  gap: 3px;
}
.task-pane button {
  display: flex;
  align-items: center;
  width: 41px;
  height: 45px;
  padding-left: 6px;
  background: #bcbdcf;
  border: 2px solid #8688a0;
  border-right: none;
  border-radius: 7px 0 0 7px;
}
.task-pane .active {
  background: #eeeef6;
}
.task-pane svg {
  width: 32px;
  height: 32px;
}
.triad {
  position: absolute;
  left: 76px;
  bottom: 29px;
  width: 80px;
  height: 110px;
  font: 19px "Liberation Sans", sans-serif;
}

/* annotation properties dialog */
.dialog {
  position: absolute;
  left: 210px;
  top: 117px;
  width: 726px;
  padding: 0 14px 14px;
  border: 2px solid #2a3442;
  border-radius: 12px;
  background: linear-gradient(#c3cfde, #d3dbe6 28%, #6f87a8 30%, #8ba6c6);
  box-shadow: 0 4px 22px 4px rgba(20, 20, 35, .75), inset 0 0 0 2px #d8e6f2;
  color: #1e1f24;
  font-size: 22px;
}
.dialog-head {
  display: flex;
  justify-content: space-between;
  height: 56px;
  margin: 0 -12px;
  padding: 0 10px 0 12px;
  border-radius: 10px 10px 0 0;
  background: linear-gradient(100deg, #c9d6e4 0, #bccde2 38%, #8ba8d0 52%, #6e7c90 60%, #8c98a8 72%, #b3c1d0 86%);
}
.dialog-head h1 {
  margin: 0;
  font-size: 22px;
  font-weight: normal;
  line-height: 56px;
}
.dialog-close {
  display: flex;
  align-items: center;
  justify-content: center;
  width: 94px;
  height: 38px;
  border: 2px solid #5d2a2a;
  border-top: none;
  border-radius: 0 0 7px 7px;
  background: linear-gradient(#e8a596, #d4695a 48%, #b8301c 52%, #dc6a50);
  box-shadow: inset 0 0 0 1px #f0b8ac;
}
.dialog-close svg {
  width: 20px;
  height: 18px;
}
.dialog-body {
  height: 739px;
  margin: 0 -2px;
  padding: 14px 23px 14px 22px;
  border: 2px solid #3f5368;
  background: #f0f0f2;
}
fieldset {
  margin: 0;
  padding: 2px 0 0 21px;
  height: 246px;
  border: 2px solid #dfdfe3;
  border-radius: 4px;
}
legend {
  margin-left: -9px;
  padding: 0 4px;
  line-height: 28px;
}
.checks {
  display: grid;
  grid-template-columns: 283px 1fr;
  white-space: nowrap;
}
.checks label {
  display: flex;
  align-items: center;
  gap: 6px;
  height: 35px;
}
input[type="checkbox"] {
  appearance: none;
  flex: none;
  position: relative;
  width: 25px;
  height: 26px;
  margin: 0;
  border: 2px solid #8c8f96;
  background: linear-gradient(135deg, #cfd2da, #fafafc);
  box-shadow: inset 0 0 0 2px #f4f4f6;
}
input[type="checkbox"]:checked::after {
  content: "";
  position: absolute;
  left: 7px;
  top: 1px;
  width: 5px;
  height: 12px;
  border: solid #4a5a96;
  border-width: 0 3px 3px 0;
  transform: rotate(35deg);
}
input[type="checkbox"]:disabled {
  border-color: #c3c4c8;
  background: #fafafa;
}
.scale {
  display: flex;
  align-items: center;
  justify-content: space-between;
  width: 412px;
  height: 42px;
  margin-top: 15px;
  color: #a3a4a8;
}
.combo {
  position: relative;
  width: 239px;
}
.combo select {
  appearance: none;
  width: 100%;
  height: 42px;
  padding: 0 6px;
  border: 2px solid #b3b4b8;
  border-radius: 4px;
  background: #f3f3f5;
  font: inherit;
  color: #77787c;
  opacity: 1;
}
.combo .tri {
  position: absolute;
  right: 10px;
  top: 18px;
  border-top-color: #8e8f94;
}
.opt {
  display: flex;
  align-items: center;
  gap: 6px;
  height: 26px;
  margin-top: 14px;
}
.opt.two {
  align-items: flex-start;
  height: 61px;
  margin-top: 20px;
  line-height: 35px;
}
.opt.two span {
  margin-top: -4px;
}
.opt.two + .opt {
  margin-top: 12px;
}
.dialog-foot {
  display: flex;
  align-items: flex-start;
  justify-content: space-between;
}
.opt.off {
  width: 450px;
  height: 52px;
  color: #8c8d92;
  line-height: 26px;
}
.buttons {
  display: flex;
  flex-direction: column;
  gap: 14px;
  margin-top: 32px;
}
.buttons button {
  width: 146px;
  height: 42px;
  border: 2px solid #77787c;
  border-radius: 5px;
  background: linear-gradient(#f6f6f6, #e8e8ea 48%, #d4d5d8 52%, #dcdde0);
  box-shadow: inset 0 0 0 1px #fff;
}
.buttons .primary {
  border-color: #2c7aa0;
  background: linear-gradient(#eef8fc, #d2eefa 48%, #a8dff4 52%, #b8ecfc);
  box-shadow: inset 0 0 0 2px #3cc4f0;
}
.buttons button:disabled {
  border-color: #b6b7bb;
  background: #f3f3f4;
  color: #97989c;
}

/* bottom tabs */
.sheets {
  display: flex;
  height: 31px;
  background: #e4e6ee;
  border-top: 2px solid #1f2027;
  border-bottom: 2px solid #74768a;
  font: 25px/24px "Liberation Sans", sans-serif;
  color: #3a3b46;
}
.nav {
  display: flex;
  width: 138px;
  padding-left: 4px;
  background: #c9cad8;
}
.nav button {
  display: flex;
  align-items: center;
  justify-content: center;
  width: 32px;
  background: #a9abbd;
  border: 1px solid #8e90a4;
}
.nav b {
  width: 3px;
  height: 14px;
  background: #8a8ca0;
}
.nav .tri-left {
  border-right-color: #8a8ca0;
}
.nav .tri-right {
  border-left-color: #8a8ca0;
}
.sheets a {
  padding: 0 27px 0 15px;
  background: #bfc0d2;
  border-right: 2px solid #4a4c5c;
  border-bottom: 3px solid #4a4c5c;
  white-space: nowrap;
}
.sheets a.active {
  padding: 0 18px;
  background: #dcdde9;
  border-left: 2px solid #4a4c5c;
  font-size: 24px;
  font-weight: bold;
}

/* status bar */
.status {
  display: flex;
  align-items: center;
  height: 37px;
  padding: 0 22px 0 4px;
  background: linear-gradient(#cfd0e0, #c3c5d8 50%, #a6b4c4);
  font-size: 23px;
  white-space: nowrap;
}
.mode {
  margin-left: auto;
  padding: 0 10px;
  border-left: 2px solid #d6d8e4;
  border-right: 2px solid #d6d8e4;
  font-size: 22px;
}
.status-help {
  width: 28px;
  height: 28px;
  margin-left: 54px;
  background: #f2fff2;
  border: 2px solid #223a5c;
  color: #12a020;
  font: bold 24px/24px "Liberation Sans", sans-serif;
}
.status-tag {
  margin-left: 100px;
}
.status-tag svg {
  width: 32px;
  height: 32px;
}
```
